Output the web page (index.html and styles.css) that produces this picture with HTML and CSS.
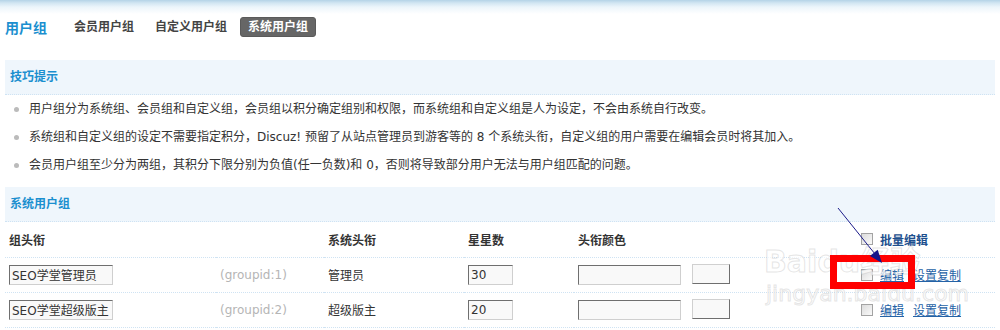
FILE: index.html
```html
<!DOCTYPE html>
<html lang="zh-CN">
<head>
    <meta charset="UTF-8">
    <title>用户组</title>
    <link rel="stylesheet" href="styles.css">
</head>
<body>
<div class="page">
    <!-- 标题与选项卡 -->
    <div class="topbar">
        <h3 class="page-title">用户组</h3>
        <ul class="tabs">
            <li><a href="#">会员用户组</a></li>
            <li><a href="#">自定义用户组</a></li>
            <li class="current"><a href="#">系统用户组</a></li>
        </ul>
    </div>

    <!-- 技巧提示 -->
    <div class="panel">
        <div class="partition">技巧提示</div>
        <ul class="tips">
            <li>用户组分为系统组、会员组和自定义组，会员组以积分确定组别和权限，而系统组和自定义组是人为设定，不会由系统自行改变。</li>
            <li>系统组和自定义组的设定不需要指定积分，Discuz! 预留了从站点管理员到游客等的 8 个系统头衔，自定义组的用户需要在编辑会员时将其加入。</li>
            <li>会员用户组至少分为两组，其积分下限分别为负值(任一负数)和 0，否则将导致部分用户无法与用户组匹配的问题。</li>
        </ul>
    </div>

    <!-- 系统用户组 -->
    <div class="panel">
        <div class="partition">系统用户组</div>
        <table class="group-table">
            <colgroup>
                <col class="c-title"><col class="c-id"><col class="c-sys"><col class="c-stars"><col class="c-color"><col class="c-ops">
            </colgroup>
            <thead>
                <tr>
                    <th>组头衔</th>
                    <th></th>
                    <th>系统头衔</th>
                    <th>星星数</th>
                    <th>头衔颜色</th>
                    <th><span class="check"></span><span class="batch">批量编辑</span></th>
                </tr>
            </thead>
            <tbody>
                <tr>
                    <td><input class="txt txt-title" type="text" value="SEO学堂管理员"></td>
                    <td class="gid">(groupid:1)</td>
                    <td>管理员</td>
                    <td><input class="txt txt-stars" type="text" value="30"></td>
                    <td><input class="txt txt-color" type="text" value=""><span class="swatch"></span></td>
                    <td><span class="check"></span><a href="#" class="op">编辑</a><a href="#" class="op">设置复制</a></td>
                </tr>
                <tr>
                    <td><input class="txt txt-title" type="text" value="SEO学堂超级版主"></td>
                    <td class="gid">(groupid:2)</td>
                    <td>超级版主</td>
                    <td><input class="txt txt-stars" type="text" value="20"></td>
                    <td><input class="txt txt-color" type="text" value=""><span class="swatch"></span></td>
                    <td><span class="check"></span><a href="#" class="op">编辑</a><a href="#" class="op">设置复制</a></td>
                </tr>
            </tbody>
        </table>
    </div>

    <!-- 截图上的标注与水印 -->
    <div class="watermark wm-logo">Baidu经验</div>
    <div class="watermark wm-url">jingyan.baidu.com</div>
    <div class="mark-box"></div>
    <svg class="mark-arrow" width="70" height="75" viewBox="830 200 70 75">
        <line x1="838" y1="208" x2="875" y2="254" stroke="#1c1c8a" stroke-width="1"/>
        <polygon points="882,263 869.9,256 877.7,249.7" fill="#14148a"/>
    </svg>
</div>
</body>
</html>
```

FILE: styles.css
```css
/* 基础 */
* {
    margin: 0;
    padding: 0;
    box-sizing: border-box;
}
body {
    font-family: "DejaVu Sans", "Noto Sans CJK SC", sans-serif;
    font-size: 12px;
    color: #333;
    background: #fff;
}
.page {
    position: relative;
    width: 1000px;
    height: 330px;
    overflow: hidden;
}
a {
    text-decoration: none;
}

/* 顶部 */
.topbar {
    display: flex;
    align-items: center;
    height: 60px;
    padding: 0 5px 6px;
    background: linear-gradient(to bottom, #b4d3e7 0, #d2e6f2 3px, #ecf5fb 7px, #fff 14px);
}
.page-title {
    font-size: 14px;
    font-weight: bold;
    color: #1b8fcf;
    margin-right: 19px;
}
.tabs {
    display: flex;
    gap: 5px;
    list-style: none;
}
.tabs a {
    display: block;
    height: 20px;
    line-height: 20px;
    padding: 0 8px;
    font-weight: bold;
    color: #444;
    border-radius: 3px;
}
.tabs .current a {
    background: #666;
    color: #fff;
    padding: 0 7px;
    border: 1px solid #5a5a5a;
    line-height: 18px;
}

/* 面板 */
.panel {
    margin: 0 5px;
}
.partition {
    height: 35px;
    line-height: 34px;
    padding-left: 5px;
    font-weight: bold;
    color: #1b8fcf;
    background: #eff6fc;
    border-bottom: 1px dotted #cfe3f3;
}
.tips {
    list-style: none;
    padding-bottom: 8px;
}
.tips li {
    position: relative;
    line-height: 28px;
    padding-left: 24px;
    color: #333;
}
.tips li::before {
    content: "";
    position: absolute;
    left: 9px;
    top: 12px;
    width: 5px;
    height: 5px;
    border-radius: 50%;
    background: #bbb;
}

/* 用户组表格 */
.group-table {
    width: 990px;
    border-collapse: collapse;
    table-layout: fixed;
}
.c-title { width: 211px; }
.c-id { width: 108px; }
.c-sys { width: 140px; }
.c-stars { width: 110px; }
.c-color { width: 283px; }
.c-ops { width: 138px; }
.group-table th,
.group-table td {
    height: 35px;
    padding: 0 0 0 4px;
    text-align: left;
    vertical-align: middle;
    border-bottom: 1px dotted #cfe3f3;
    white-space: nowrap;
}
.group-table th {
    font-weight: bold;
    color: #333;
}
.gid {
    color: #b5b5b5;
}
.txt {
    height: 20px;
    padding: 0 2px;
    font-family: inherit;
    font-size: 12px;
    color: #333;
    background: #f9f9f9;
    border: 1px solid;
    border-color: #6f6f6f #cfcfcf #cfcfcf #6f6f6f;
    outline: none;
    vertical-align: middle;
}
.txt-title { width: 104px; }
.txt-stars { width: 45px; }
.txt-color { width: 103px; }
.swatch {
    display: inline-block;
    width: 38px;
    height: 20px;
    margin: 0 0 2px 11px;
    background: #f9f9f9;
    border: 1px solid;
    border-color: #d0d0d0 #6f6f6f #6f6f6f #d0d0d0;
    vertical-align: middle;
}
.check {
    display: inline-block;
    width: 12px;
    height: 12px;
    margin-right: 7px;
    border: 1px solid #a3a3a3;
    background: linear-gradient(135deg, #dcdcdc, #fafafa);
    vertical-align: middle;
}
.batch {
    font-weight: bold;
    color: #1d4f8e;
    vertical-align: middle;
}
.op {
    color: #2462a6;
    text-decoration: underline;
    margin-right: 9px;
    vertical-align: middle;
}

/* 标注 */
.mark-box {
    position: absolute;
    left: 830px;
    top: 255px;
    width: 85px;
    height: 34px;
    border: 7px solid #f00;
}
.mark-arrow {
    position: absolute;
    left: 830px;
    top: 200px;
}
.watermark {
    position: absolute;
    font-family: "DejaVu Sans", "Noto Sans CJK SC", sans-serif;
    color: rgba(255, 255, 255, 0.7);
    -webkit-text-stroke: 1px rgba(190, 190, 190, 0.4);
    white-space: nowrap;
}
.wm-logo {
    left: 764px;
    top: 237px;
    font-size: 30px;
    font-weight: bold;
}
.wm-url {
    left: 766px;
    top: 281px;
    font-size: 22px;
}
```
